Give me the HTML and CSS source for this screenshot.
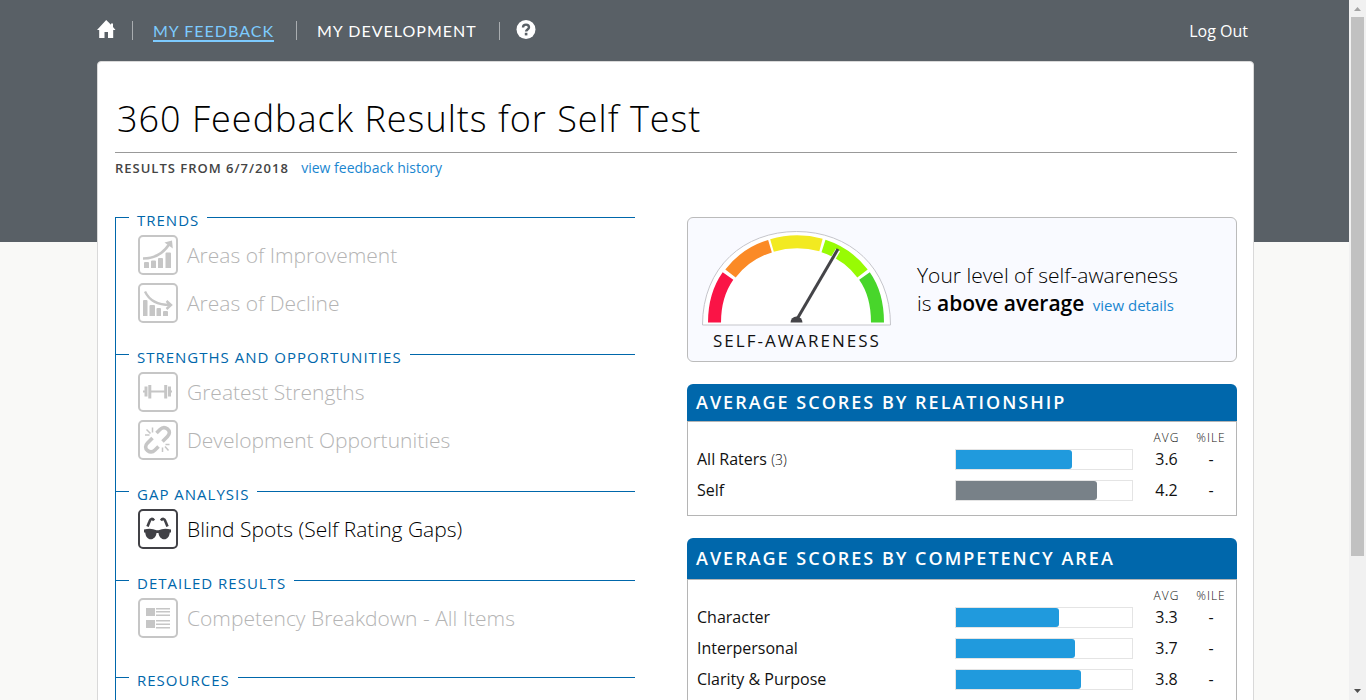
FILE: index.html
```html
<!DOCTYPE html>
<html lang="en">
<head>
<meta charset="utf-8">
<meta name="viewport" content="width=device-width, initial-scale=1">
<title>360 Feedback Results</title>
<link rel="stylesheet" href="styles.css">
</head>
<body>
<div class="window">
<div class="page">
  <header class="topbar">
    <nav>
      <ul class="nav">
        <li class="nav-home"><a href="#" aria-label="Home"><svg width="20" height="20" viewBox="0 0 20 20"><path fill="#fff" d="M9.200 0 0 10h2.200v8h5.300v-6h3.500v6h5.200v-8h2.300L16 7V3.500h-2v1.300z"/></svg></a></li>
        <li><a class="active" href="#">MY FEEDBACK</a></li>
        <li><a href="#">MY DEVELOPMENT</a></li>
        <li class="nav-help"><a href="#" aria-label="Help"><svg width="20" height="20" viewBox="0 0 20 20"><circle cx="10" cy="9.500" r="9.500" fill="#fff"/><path d="M7 7.600C7 5.500 8.300 4.600 10 4.600s3 .9 3 2.700c0 2.200-2.900 2.200-2.900 4.300" fill="none" stroke="#596066" stroke-width="2.400"/><rect x="8.800" y="12.800" width="2.600" height="2.600" fill="#596066"/></svg></a></li>
      </ul>
    </nav>
    <a class="logout" href="#">Log Out</a>
  </header>

  <main class="sheet">
    <h1>360 Feedback Results for Self Test</h1>
    <p class="history">RESULTS FROM 6/7/2018 <a href="#">view feedback history</a></p>

    <div class="columns">
      <div class="menu">
        <section class="group">
          <h2>TRENDS</h2>
          <a class="item" href="#"><svg class="icon" viewBox="0 0 40 40"><rect class="frame" x="1" y="1" width="38" height="38" rx="4"/><path class="fill" d="M6 28q0-1 1-1h3q1 0 1 1v5H6zM13 26.500q0-1 1-1h3q1 0 1 1V33h-5zM20 24q0-1 1-1h3q1 0 1 1v9h-5zM27.500 18.500q0-1 1-1h3.500q1 0 1 1V33h-5.500z"/><path class="line" stroke-width="2.600" d="M5 23.500C16 23.500 25 18.500 31 9.500"/><path class="fill" d="m26.500 7.500 7.500-2 .8 8z"/></svg><span>Areas of Improvement</span></a>
          <a class="item" href="#"><svg class="icon" viewBox="0 0 40 40"><rect class="frame" x="1" y="1" width="38" height="38" rx="4"/><path class="fill" d="M5 18q0-1 1-1h2.500q1 0 1 1v15H5zM11.500 23q0-1 1-1H16q1 0 1 1v10h-5.500zM18.500 26q0-1 1-1H22q1 0 1 1v7h-4.500zM25 29q0-1 1-1h3q1 0 1 1v4h-5z"/><path class="line" stroke-width="2.400" d="M7 8.500c4 8.500 12 13.500 25 13.500M28.500 18l4.500 4-4.500 4"/></svg><span>Areas of Decline</span></a>
        </section>
        <section class="group">
          <h2>STRENGTHS AND OPPORTUNITIES</h2>
          <a class="item" href="#"><svg class="icon" viewBox="0 0 40 40"><rect class="frame" x="1" y="1" width="38" height="38" rx="4"/><path class="line" stroke-width="2" d="M13 19.500h14M5 19.500h3M32 19.500h2"/><path class="line" stroke-width="3" d="M8 14.500v10M11.800 13v13.500M27.700 13v13.500M31.500 14.500v10"/></svg><span>Greatest Strengths</span></a>
          <a class="item" href="#"><svg class="icon" viewBox="0 0 40 40"><rect class="frame" x="1" y="1" width="38" height="38" rx="4"/><path class="line" stroke-width="3.600" d="M18.500 13l3.500-3.500c2.500-2.500 5-2.500 7.500-.5s2.500 5 0 7.500L24.500 21.500M20.500 26.500l-3.500 3.500c-2.500 2.500-5 2.500-7.500.5s-2.500-5 0-7.500l5-5"/><path class="line" stroke-width="1.500" d="M8.500 9.500l4 4M14.500 7.500v5M7 15h4.500M24.500 27.500v4.500M27 26.500l3.500 4M27.500 24.500h4"/></svg><span>Development Opportunities</span></a>
        </section>
        <section class="group">
          <h2>GAP ANALYSIS</h2>
          <a class="item enabled" href="#"><svg class="icon" viewBox="0 0 40 40"><rect class="frame" x="1" y="1" width="38" height="38" rx="4"/><path class="fill" d="M6 20.500q7-2 12.500.7h2q5.500-2.700 12.500-.7v3h-1.200C31.300 28 29 30.300 26.500 30.300c-3 0-5.500-2.300-6-6.300h-2c-.5 4-3 6.300-6 6.300-2.500 0-4.800-2.300-5.300-6.800H6z"/><path class="line" stroke-width="2.600" d="M16 11.500c-1.500-2.500-3.500-2-4.500 1L9.500 17.500M23 11.500c1.500-2.500 3.500-2 4.500 1l2 5"/></svg><span>Blind Spots (Self Rating Gaps)</span></a>
        </section>
        <section class="group roomy">
          <h2>DETAILED RESULTS</h2>
          <a class="item" href="#"><svg class="icon" viewBox="0 0 40 40"><rect class="frame" x="1" y="1" width="38" height="38" rx="4"/><path class="fill" d="M8 10h9v8H8zM8 22h9v8H8zM18 10h14v1.400H18zM18 13h14v1.400H18zM18 16.500h14v1.400H18zM18 22h14v1.400H18zM18 25.500h14v1.400H18zM18 29h14v1.400H18z"/></svg><span>Competency Breakdown - All Items</span></a>
        </section>
        <section class="group">
          <h2>RESOURCES</h2>
        </section>
      </div>

      <div class="results">
        <section class="awareness">
          <figure>
            <svg width="190" height="96" viewBox="0 0 190 96" role="img" aria-label="Gauge pointing to above average">
              <path d="M.5 95C.5 37 42 1.500 94.500 1.500S188.500 37 188.500 95z" fill="#fff" stroke="#c5c5cb"/>
              <g fill="none" stroke-width="13">
                <path stroke="#fa1446" d="M12.500 92.500C12.500 73 17.500 58 26 46"/>
                <path stroke="#fb8a26" d="M28.500 43.500C38 31 52 21 68 16.200"/>
                <path stroke="#f2ea21" d="M70 15.500Q94 8.500 119 15"/>
                <path stroke="#98fb04" d="M121.500 16C137 21 151 31 160.500 43.500"/>
                <path stroke="#48d62b" d="M162.500 46C171 58 175.500 73 175.500 92.500"/>
              </g>
              <path d="M94.500 90 136 20" stroke="#fff" stroke-width="5"/>
              <path d="M94.500 90 136 19" stroke="#444448" stroke-width="3"/>
              <path d="M88.500 92.500a6 6 0 0 1 12 0z" fill="#444448"/>
            </svg>
            <figcaption>SELF-AWARENESS</figcaption>
          </figure>
          <p>Your level of self-awareness<br>is <strong>above average</strong> <a href="#">view details</a></p>
        </section>

        <section class="panel">
          <h2>AVERAGE SCORES BY RELATIONSHIP</h2>
          <table>
            <thead><tr><th class="name"></th><th class="score"></th><th class="avg">AVG</th><th class="ile">%ILE</th></tr></thead>
            <tbody>
              <tr><td>All Raters <small>(3)</small></td><td><div class="track"><div class="bar" style="width:66%"></div></div></td><td class="avg">3.6</td><td class="ile">-</td></tr>
              <tr><td>Self</td><td><div class="track"><div class="bar self" style="width:80%"></div></div></td><td class="avg">4.2</td><td class="ile">-</td></tr>
            </tbody>
          </table>
        </section>

        <section class="panel tall">
          <h2>AVERAGE SCORES BY COMPETENCY AREA</h2>
          <table>
            <thead><tr><th class="name"></th><th class="score"></th><th class="avg">AVG</th><th class="ile">%ILE</th></tr></thead>
            <tbody>
              <tr><td>Character</td><td><div class="track"><div class="bar" style="width:58.500%"></div></div></td><td class="avg">3.3</td><td class="ile">-</td></tr>
              <tr><td>Interpersonal</td><td><div class="track"><div class="bar" style="width:67.500%"></div></div></td><td class="avg">3.7</td><td class="ile">-</td></tr>
              <tr><td>Clarity &amp; Purpose</td><td><div class="track"><div class="bar" style="width:71%"></div></div></td><td class="avg">3.8</td><td class="ile">-</td></tr>
            </tbody>
          </table>
        </section>
      </div>
    </div>
  </main>
</div>
<div class="scrollbar" aria-hidden="true">
  <svg width="17" height="17" viewBox="0 0 17 17"><path d="M5 11h7L8.500 7z" fill="#a3a3a3"/></svg>
  <div class="rail"><div class="thumb"></div></div>
  <svg width="17" height="17" viewBox="0 0 17 17"><path d="M5 6h7l-3.500 4z" fill="#505050"/></svg>
</div>
</div>
</body>
</html>
```
FILE: styles.css
```css
* { box-sizing: border-box; }

body {
  margin: 0;
  font-family: "Open Sans", "Noto Sans", sans-serif;
  font-size: 16px;
  color: #111;
}

h1, h2, p, ul, figure { margin: 0; padding: 0; }
a { color: #1a86d0; text-decoration: none; }
svg { display: block; }

.window { display: flex; height: 100vh; overflow: hidden; }

.page {
  flex: 1;
  min-width: 0;
  overflow: hidden;
  padding: 0 95px 0 97px;
  background: linear-gradient(#596066 242px, #f9f9f7 242px);
}

/* Top bar */
.topbar {
  display: flex;
  justify-content: space-between;
  align-items: center;
  height: 61px;
  padding-right: 6px;
}
.nav {
  display: flex;
  align-items: center;
  list-style: none;
  font-family: Lato, sans-serif;
  letter-spacing: 1px;
}
.nav li { padding: 0 22px 0 20px; border-left: 1px solid #a9adb0; line-height: 19px; }
.nav .nav-home { padding: 0 15px 0 0; border-left: 0; }
.nav .nav-help { padding: 0 16px; }
.nav a { display: block; color: #fff; }
.nav svg { margin-top: -2px; }
.nav .active { color: #7dcbff; border-bottom: 2px solid #7dcbff; margin-bottom: -2px; }
.logout { color: #fff; }

/* Sheet */
.sheet {
  min-height: 100vh;
  padding: 32px 16px 0 17px;
  background: #fff;
  border: 1px solid #d9d9d9;
  border-radius: 4px;
}
h1 {
  padding: 0 2px 8px;
  border-bottom: 1px solid #999;
  font-size: 36px;
  line-height: 50px;
  font-weight: 300;
  letter-spacing: 1px;
  color: #000;
}
.history {
  margin-top: 5px;
  font-size: 13px;
  line-height: 20px;
  font-weight: 600;
  letter-spacing: 1px;
  color: #444;
}
.history a { margin-left: 8px; font-size: 14px; font-weight: 400; letter-spacing: 0; }

.columns {
  display: grid;
  grid-template-columns: 520fr 550fr;
  column-gap: 52px;
  margin-top: 39px;
}

/* Report menu */
.group {
  display: flex;
  flex-direction: column;
  gap: 8px;
  padding-bottom: 31px;
  border-left: 1px solid #0067ab;
}
.group.roomy { padding-bottom: 39px; }
.group h2 {
  display: flex;
  gap: 8px;
  margin: -9px 0 -5px;
  font-size: 15px;
  line-height: 24px;
  font-weight: 500;
  letter-spacing: 1px;
  color: #0067ab;
}
.group h2::before, .group h2::after {
  content: "";
  width: 13px;
  height: 1px;
  margin-top: 9px;
  background: #0067ab;
}
.group h2::after { flex: 1; }
.item {
  display: flex;
  align-items: center;
  gap: 9px;
  padding-left: 22px;
  font-size: 21px;
  line-height: 40px;
  font-weight: 300;
  color: #b4b4b4;
}
.icon { flex: none; width: 40px; height: 40px; color: #c6c6c6; }
.enabled { color: #000; }
.enabled .icon { color: #414146; }
.frame { fill: none; stroke: currentColor; stroke-width: 2; }
.fill { fill: currentColor; }
.line { fill: none; stroke: currentColor; }

/* Self-awareness */
.awareness {
  display: flex;
  align-items: center;
  gap: 25px;
  height: 145px;
  padding-left: 14px;
  background: #f9faff;
  border: 1px solid #bbb;
  border-radius: 6px;
}
figure { padding-top: 6px; }
figcaption { font-size: 17px; line-height: 30px; letter-spacing: 2px; text-align: center; }
.awareness p { font-size: 21px; line-height: 28px; font-weight: 300; color: #000; }
.awareness strong { font-weight: 600; }
.awareness p a { margin-left: 3px; font-size: 15px; font-weight: 400; }

/* Score panels */
.panel { margin-top: 22px; }
.panel h2 {
  padding-left: 9px;
  background: #0067ab;
  border-radius: 6px 6px 0 0;
  font-size: 18px;
  line-height: 37px;
  font-weight: 600;
  letter-spacing: 2px;
  color: #fff;
}
.panel.tall h2 { line-height: 41px; }
.panel table {
  width: 100%;
  table-layout: fixed;
  border: 1px solid #b5b5b5;
  border-collapse: separate;
  border-spacing: 0;
  padding: 9px 2px 9px 9px;
}
.panel th { height: 13px; padding: 0; font-size: 12px; line-height: 13px; font-weight: 300; letter-spacing: 1px; }
.panel td { height: 31px; padding: 0; line-height: 21px; }
.name { width: auto; }
.score { width: 178px; }
.avg { width: 55px; text-align: center; }
.panel .avg { padding-left: 12px; }
.ile { width: 46px; text-align: center; }
small { font-size: 14px; font-weight: 300; }
.track { height: 21px; border: 1px solid #e4e4e4; }
.bar { height: 100%; background: #209add; border-radius: 0 3px 3px 0; }
.bar.self { background: #788188; }

/* Scrollbar */
.scrollbar { display: flex; flex-direction: column; width: 17px; background: #f1f1f1; }
.rail { flex: 1; padding: 0 2px; }
.thumb { height: 81%; background: #c1c1c1; }
```
